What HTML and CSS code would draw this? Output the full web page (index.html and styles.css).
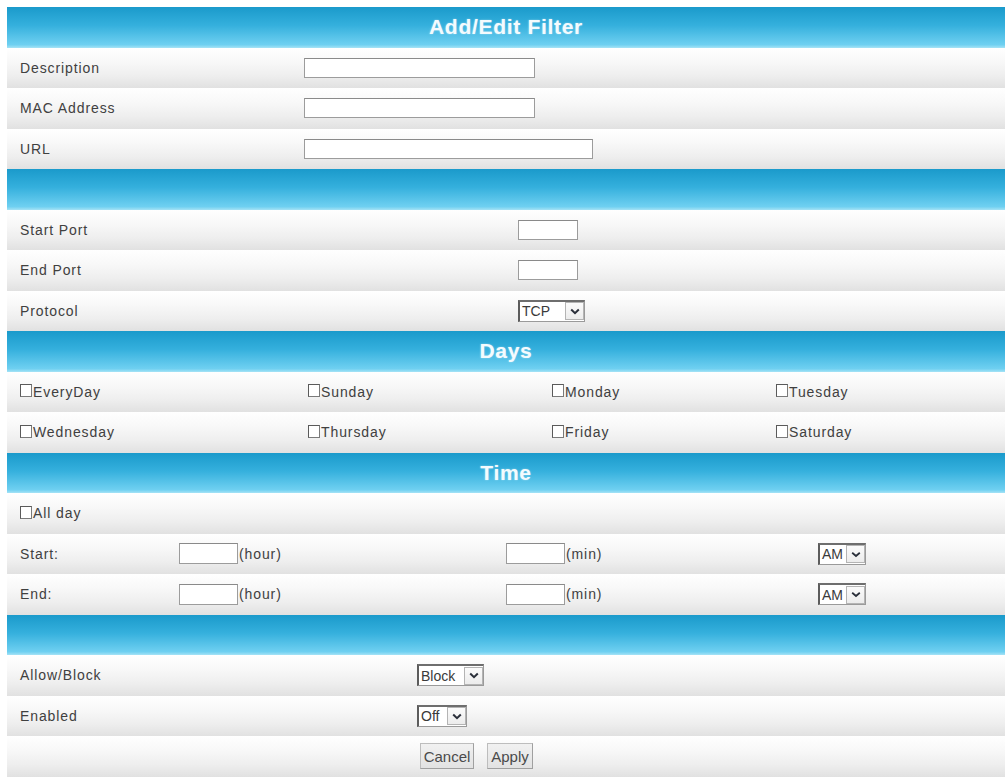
FILE: index.html
```html
<!DOCTYPE html>
<html>
<head>
<meta charset="utf-8">
<title>Add/Edit Filter</title>
<link rel="stylesheet" href="styles.css">
</head>
<body>
<div class="filter">
  <div class="hdr">Add/Edit Filter</div>
  <div class="row cols-a"><span class="lbl">Description</span><span class="cell"><input type="text" class="txt w-desc"></span></div>
  <div class="row cols-a"><span class="lbl">MAC Address</span><span class="cell"><input type="text" class="txt w-desc"></span></div>
  <div class="row cols-a"><span class="lbl">URL</span><span class="cell"><input type="text" class="txt w-url"></span></div>

  <div class="hdr"></div>
  <div class="row cols-b"><span class="lbl">Start Port</span><span class="cell"><input type="text" class="txt w-port"></span></div>
  <div class="row cols-b"><span class="lbl">End Port</span><span class="cell"><input type="text" class="txt w-port"></span></div>
  <div class="row cols-b"><span class="lbl">Protocol</span><span class="cell"><span class="sel w-tcp"><span class="sel-val">TCP</span><span class="sel-btn"><svg width="10" height="7" viewBox="0 0 10 7"><path d="M1.2 1.5 L5 5.2 L8.8 1.5" fill="none" stroke="#2a2f3a" stroke-width="2"/></svg></span></span></span></div>

  <div class="hdr">Days</div>
  <div class="row cols-days">
    <label class="lbl chk"><input type="checkbox" class="cb">EveryDay</label>
    <label class="lbl chk"><input type="checkbox" class="cb">Sunday</label>
    <label class="lbl chk"><input type="checkbox" class="cb">Monday</label>
    <label class="lbl chk"><input type="checkbox" class="cb">Tuesday</label>
  </div>
  <div class="row cols-days">
    <label class="lbl chk"><input type="checkbox" class="cb">Wednesday</label>
    <label class="lbl chk"><input type="checkbox" class="cb">Thursday</label>
    <label class="lbl chk"><input type="checkbox" class="cb">Friday</label>
    <label class="lbl chk"><input type="checkbox" class="cb">Saturday</label>
  </div>

  <div class="hdr">Time</div>
  <div class="row cols-one"><label class="lbl chk"><input type="checkbox" class="cb">All day</label></div>
  <div class="row cols-time">
    <span class="lbl">Start:</span>
    <span class="cell"><input type="text" class="txt w-time">(hour)</span>
    <span class="cell"><input type="text" class="txt w-time">(min)</span>
    <span class="cell"><span class="sel w-am"><span class="sel-val">AM</span><span class="sel-btn"><svg width="10" height="7" viewBox="0 0 10 7"><path d="M1.2 1.8 L5 5 L8.8 1.8" fill="none" stroke="#2a2f3a" stroke-width="1.8"/></svg></span></span></span>
  </div>
  <div class="row cols-time">
    <span class="lbl">End:</span>
    <span class="cell"><input type="text" class="txt w-time">(hour)</span>
    <span class="cell"><input type="text" class="txt w-time">(min)</span>
    <span class="cell"><span class="sel w-am"><span class="sel-val">AM</span><span class="sel-btn"><svg width="10" height="7" viewBox="0 0 10 7"><path d="M1.2 1.8 L5 5 L8.8 1.8" fill="none" stroke="#2a2f3a" stroke-width="1.8"/></svg></span></span></span>
  </div>

  <div class="hdr"></div>
  <div class="row cols-c"><span class="lbl">Allow/Block</span><span class="cell"><span class="sel w-block"><span class="sel-val">Block</span><span class="sel-btn"><svg width="10" height="7" viewBox="0 0 10 7"><path d="M1.2 1.5 L5 5.2 L8.8 1.5" fill="none" stroke="#2a2f3a" stroke-width="2"/></svg></span></span></span></div>
  <div class="row cols-c"><span class="lbl">Enabled</span><span class="cell"><span class="sel w-off"><span class="sel-val">Off</span><span class="sel-btn"><svg width="10" height="7" viewBox="0 0 10 7"><path d="M1.2 1.5 L5 5.2 L8.8 1.5" fill="none" stroke="#2a2f3a" stroke-width="2"/></svg></span></span></span></div>
  <div class="row btn-row"><button class="btn w-cancel">Cancel</button><button class="btn w-apply">Apply</button></div>
</div>
</body>
</html>
```

FILE: styles.css
```css
html, body {
  margin: 0;
  padding: 0;
  background: #ffffff;
}

.filter {
  margin: 7px 0 0 7px;
  width: 998px;
  font-family: "Liberation Sans", Arial, sans-serif;
  font-size: 14px;
  letter-spacing: 0.9px;
  color: #404040;
}

.hdr {
  height: 40.5px;
  box-sizing: border-box;
  display: flex;
  align-items: center;
  justify-content: center;
  background: linear-gradient(to bottom, #1a9acb 0%, #35b0dd 45%, #6fd0f1 92%, #a6e3f6 100%);
  color: #f4fbfe;
  font-size: 21px;
  font-weight: bold;
  letter-spacing: 0.7px;
  text-shadow: 0 0 2px rgba(255, 255, 255, 0.45);
}

.row {
  height: 40.5px;
  box-sizing: border-box;
  display: grid;
  align-items: center;
  background: linear-gradient(to bottom, #ffffff 0%, #f8f8f8 35%, #eeeeee 70%, #e1e1e1 100%);
}

.lbl {
  padding-left: 13px;
  white-space: nowrap;
}

.cell {
  display: flex;
  align-items: center;
  white-space: nowrap;
}

.cols-a { grid-template-columns: 297px 1fr; }
.cols-b { grid-template-columns: 511px 1fr; }
.cols-c { grid-template-columns: 410px 1fr; }
.cols-one { grid-template-columns: 1fr; }
.cols-days { grid-template-columns: 288px 244px 224px 242px; }
.cols-time { grid-template-columns: 172px 327px 312px 1fr; }

.txt {
  box-sizing: border-box;
  height: 20px;
  margin: 0;
  padding: 0 2px;
  border: 1px solid #9c9c9c;
  border-top-color: #8a8a8a;
  background: #ffffff;
  font: inherit;
}

.w-desc { width: 231px; }
.w-url { width: 289px; }
.w-port { width: 60px; }
.w-time { width: 59px; height: 21px; margin-right: 1px; }

.chk {
  display: flex;
  align-items: center;
}

.cb {
  appearance: none;
  -webkit-appearance: none;
  box-sizing: border-box;
  width: 12px;
  height: 13px;
  margin: 0 1px 0 0;
  border: 1px solid #5a5a5a;
  border-right-color: #7a7a7a;
  border-bottom-color: #7a7a7a;
  background: #ffffff;
  position: relative;
  top: -1px;
}

.sel {
  box-sizing: border-box;
  height: 22px;
  display: flex;
  align-items: center;
  justify-content: space-between;
  border: 1px solid #9a9a9a;
  border-left: 2px solid #5c5c5c;
  border-top: 2px solid #6e6e6e;
  background: #ffffff;
  font-size: 14px;
  letter-spacing: 0;
  color: #3a3a3a;
}

.sel-val {
  padding-left: 2px;
}

.sel-btn {
  box-sizing: border-box;
  width: 19px;
  height: 18px;
  display: flex;
  align-items: center;
  justify-content: center;
  border: 1px solid #b4b4b4;
  background: linear-gradient(to bottom, #fbfbfb, #ececec);
}

.w-tcp { width: 67px; }
.w-am { width: 48px; }
.w-block { width: 67px; }
.w-off { width: 50px; }

.btn-row {
  display: flex;
  align-items: center;
  padding-left: 413px;
  gap: 13px;
}

.btn {
  box-sizing: border-box;
  height: 26px;
  margin: 0;
  padding: 0;
  border: 1px solid #a0a0a0;
  border-top-color: #bdbdbd;
  border-left-color: #bdbdbd;
  background: linear-gradient(to bottom, #f1f1f1, #e2e2e2);
  font-family: "Liberation Sans", Arial, sans-serif;
  font-size: 15px;
  letter-spacing: 0;
  color: #4a4a4a;
}

.w-cancel { width: 54px; }
.w-apply { width: 46px; }
```
